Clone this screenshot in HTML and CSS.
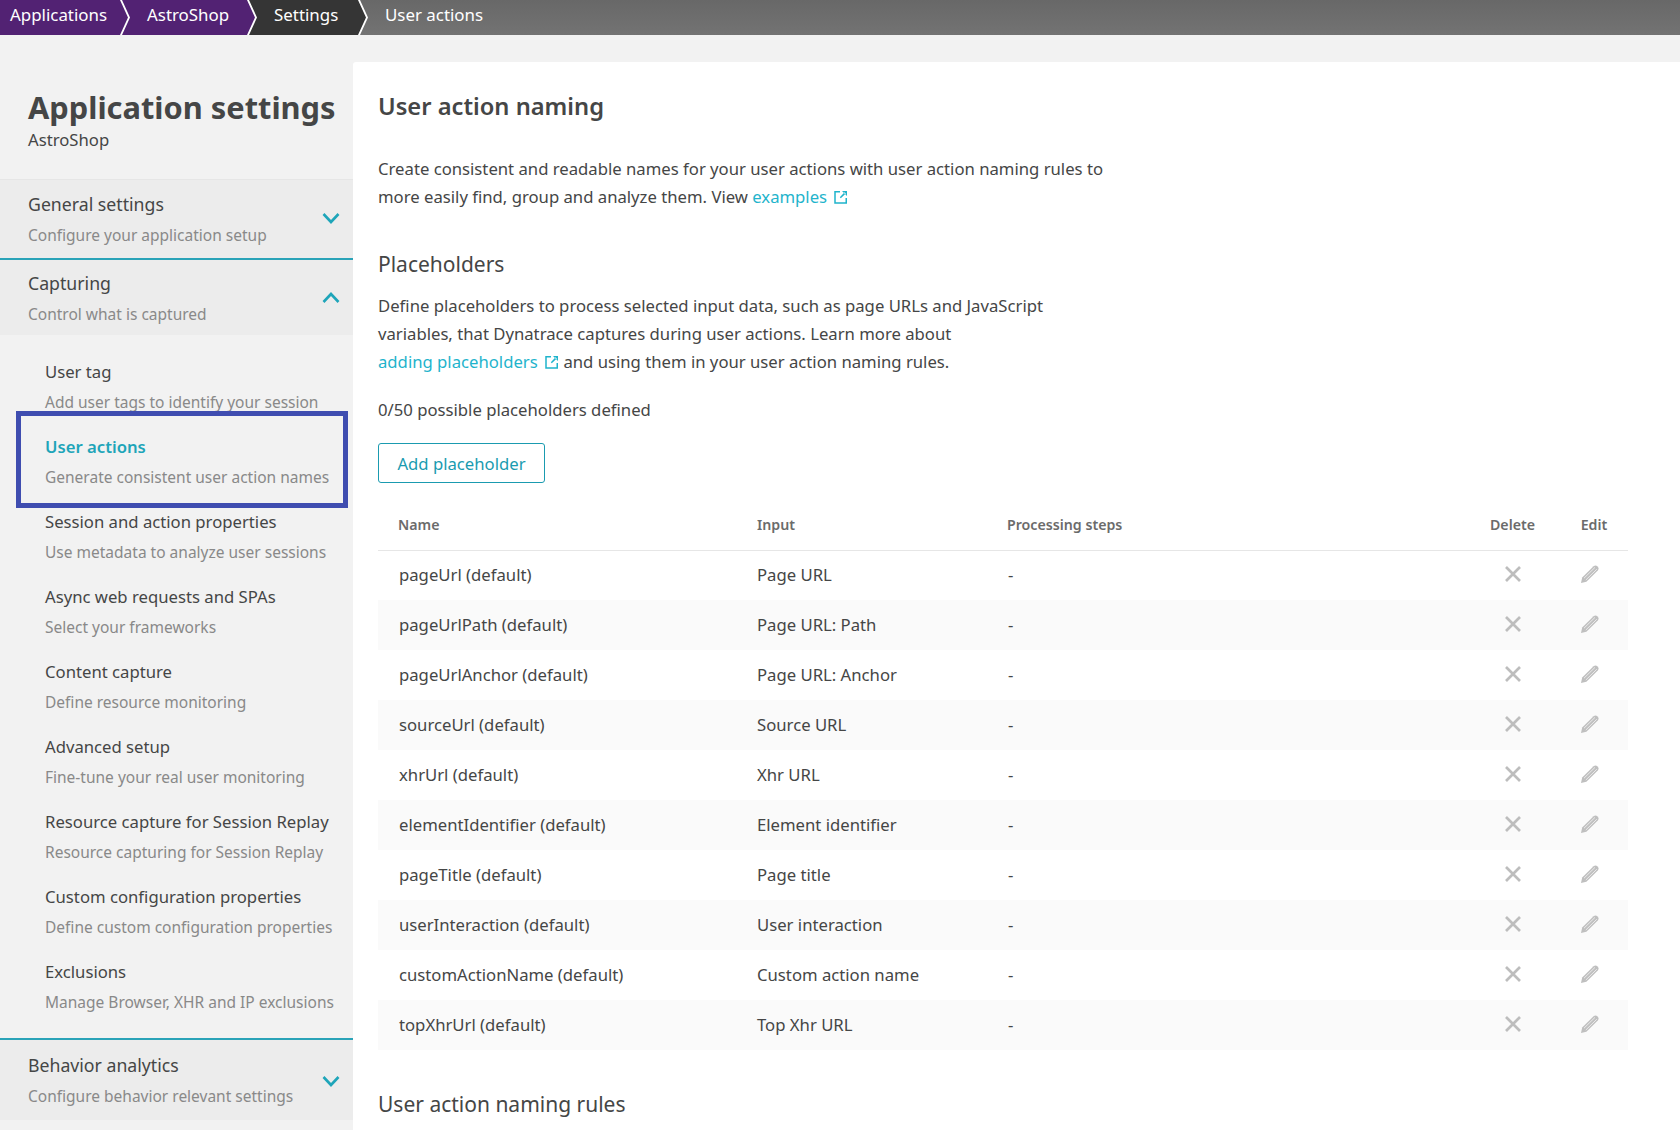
FILE: index.html
```html
<!DOCTYPE html>
<html lang="en">
<head>
    <meta charset="UTF-8">
    <meta name="viewport" content="width=device-width, initial-scale=1.0">
    <title>User actions - Application settings</title>
    <link rel="stylesheet" href="styles.css">
</head>
<body>
    <svg class="icon-defs" width="0" height="0" aria-hidden="true">
        <symbol id="i-down" viewBox="0 0 18 12"><path d="M1.5 2 L9 10 L16.5 2" fill="none" stroke="currentColor" stroke-width="2.6"/></symbol>
        <symbol id="i-up" viewBox="0 0 18 12"><path d="M1.5 10 L9 2 L16.5 10" fill="none" stroke="currentColor" stroke-width="2.6"/></symbol>
        <symbol id="i-ext" viewBox="0 0 14 14"><path d="M6 1.75 H1 V13 H12.25 V8" fill="none" stroke="currentColor" stroke-width="1.5"/><path d="M8 1 H13 V6 Z M10.6 2.2 L5.8 7.2 L6.8 8.2 L11.8 3.4 Z" fill="currentColor"/></symbol>
        <symbol id="i-x" viewBox="0 0 16 16"><path d="M1 1 L15 15 M15 1 L1 15" fill="none" stroke="currentColor" stroke-width="2.7"/></symbol>
        <symbol id="i-pen" viewBox="0 0 18 18"><path d="M0 18 L1.2 12.6 L12.6 1.2 Q14.6 -0.4 16.6 1.4 Q18.4 3.4 16.8 5.4 L5.4 16.8 Z" fill="#bfbfbf"/><path d="M3 13.2 L14 2.4 M4.8 15 L15.8 4.2" fill="none" stroke="#f0f0f0" stroke-width="0.9"/></symbol>
    </svg>

    <nav class="crumbs">
        <a class="crumb crumb-apps">Applications</a>
        <a class="crumb crumb-app">AstroShop</a>
        <a class="crumb crumb-settings">Settings</a>
        <span class="crumb crumb-last">User actions</span>
    </nav>

    <div class="layout">
        <aside class="sidebar">
            <header class="side-head">
                <h1>Application settings</h1>
                <p>AstroShop</p>
            </header>

            <section class="group group-top">
                <div class="group-text">
                    <h2>General settings</h2>
                    <p>Configure your application setup</p>
                </div>
                <svg class="chev"><use href="#i-down"/></svg>
            </section>

            <section class="group group-open">
                <div class="group-text">
                    <h2>Capturing</h2>
                    <p>Control what is captured</p>
                </div>
                <svg class="chev"><use href="#i-up"/></svg>
            </section>

            <ul class="side-items">
                <li><h3>User tag</h3><p>Add user tags to identify your session</p></li>
                <li class="active"><h3>User actions</h3><p>Generate consistent user action names</p></li>
                <li><h3>Session and action properties</h3><p>Use metadata to analyze user sessions</p></li>
                <li><h3>Async web requests and SPAs</h3><p>Select your frameworks</p></li>
                <li><h3>Content capture</h3><p>Define resource monitoring</p></li>
                <li><h3>Advanced setup</h3><p>Fine-tune your real user monitoring</p></li>
                <li><h3>Resource capture for Session Replay</h3><p>Resource capturing for Session Replay</p></li>
                <li><h3>Custom configuration properties</h3><p>Define custom configuration properties</p></li>
                <li><h3>Exclusions</h3><p>Manage Browser, XHR and IP exclusions</p></li>
            </ul>

            <section class="group group-open group-last">
                <div class="group-text">
                    <h2>Behavior analytics</h2>
                    <p>Configure behavior relevant settings</p>
                </div>
                <svg class="chev"><use href="#i-down"/></svg>
            </section>
        </aside>

        <main class="panel">
            <h2 class="page-title">User action naming</h2>
            <p class="text intro">Create consistent and readable names for your user actions with user action naming rules to more easily find, group and analyze them. View <a class="link">examples <svg class="ext"><use href="#i-ext"/></svg></a></p>

            <h3 class="sub-title">Placeholders</h3>
            <p class="text">Define placeholders to process selected input data, such as page URLs and JavaScript variables, that Dynatrace captures during user actions. Learn more about <a class="link">adding placeholders <svg class="ext"><use href="#i-ext"/></svg></a> and using them in your user action naming rules.</p>
            <p class="count">0/50 possible placeholders defined</p>
            <button class="btn">Add placeholder</button>

            <table class="ph-table">
                <thead>
                    <tr>
                        <th class="col-name">Name</th>
                        <th class="col-input">Input</th>
                        <th>Processing steps</th>
                        <th class="col-del">Delete</th>
                        <th class="col-edit">Edit</th>
                    </tr>
                </thead>
                <tbody>
                    <tr><td>pageUrl (default)</td><td>Page URL</td><td>-</td><td class="col-del"><svg class="ico-x"><use href="#i-x"/></svg></td><td class="col-edit"><svg class="ico-pen"><use href="#i-pen"/></svg></td></tr>
                    <tr><td>pageUrlPath (default)</td><td>Page URL: Path</td><td>-</td><td class="col-del"><svg class="ico-x"><use href="#i-x"/></svg></td><td class="col-edit"><svg class="ico-pen"><use href="#i-pen"/></svg></td></tr>
                    <tr><td>pageUrlAnchor (default)</td><td>Page URL: Anchor</td><td>-</td><td class="col-del"><svg class="ico-x"><use href="#i-x"/></svg></td><td class="col-edit"><svg class="ico-pen"><use href="#i-pen"/></svg></td></tr>
                    <tr><td>sourceUrl (default)</td><td>Source URL</td><td>-</td><td class="col-del"><svg class="ico-x"><use href="#i-x"/></svg></td><td class="col-edit"><svg class="ico-pen"><use href="#i-pen"/></svg></td></tr>
                    <tr><td>xhrUrl (default)</td><td>Xhr URL</td><td>-</td><td class="col-del"><svg class="ico-x"><use href="#i-x"/></svg></td><td class="col-edit"><svg class="ico-pen"><use href="#i-pen"/></svg></td></tr>
                    <tr><td>elementIdentifier (default)</td><td>Element identifier</td><td>-</td><td class="col-del"><svg class="ico-x"><use href="#i-x"/></svg></td><td class="col-edit"><svg class="ico-pen"><use href="#i-pen"/></svg></td></tr>
                    <tr><td>pageTitle (default)</td><td>Page title</td><td>-</td><td class="col-del"><svg class="ico-x"><use href="#i-x"/></svg></td><td class="col-edit"><svg class="ico-pen"><use href="#i-pen"/></svg></td></tr>
                    <tr><td>userInteraction (default)</td><td>User interaction</td><td>-</td><td class="col-del"><svg class="ico-x"><use href="#i-x"/></svg></td><td class="col-edit"><svg class="ico-pen"><use href="#i-pen"/></svg></td></tr>
                    <tr><td>customActionName (default)</td><td>Custom action name</td><td>-</td><td class="col-del"><svg class="ico-x"><use href="#i-x"/></svg></td><td class="col-edit"><svg class="ico-pen"><use href="#i-pen"/></svg></td></tr>
                    <tr><td>topXhrUrl (default)</td><td>Top Xhr URL</td><td>-</td><td class="col-del"><svg class="ico-x"><use href="#i-x"/></svg></td><td class="col-edit"><svg class="ico-pen"><use href="#i-pen"/></svg></td></tr>
                </tbody>
            </table>

            <h3 class="sub-title rules-title">User action naming rules</h3>
        </main>
    </div>
</body>
</html>
```

FILE: styles.css
```css
* {
    box-sizing: border-box;
}

html, body {
    height: 100%;
    overflow: hidden;
}

body {
    margin: 0;
    font-family: "Noto Sans", sans-serif;
    font-size: 16.7px;
    color: #454646;
    background: #f2f2f2;
}

h1, h2, h3, p, ul {
    margin: 0;
    padding: 0;
    font-weight: 400;
}

.icon-defs {
    position: absolute;
}

/* breadcrumbs: white shows through the gaps between the arrows */
.crumbs {
    display: flex;
    height: 35px;
    background: #fff;
    color: #fff;
    font-size: 16.9px;
    line-height: 30px;
}

.crumb {
    display: block;
    height: 35px;
    padding-left: 25px;
    margin-left: -6px;
    clip-path: polygon(0 0, calc(100% - 8px) 0, 100% 50%, calc(100% - 8px) 100%, 0 100%, 8px 50%);
}

.crumb-apps {
    width: 128px;
    margin-left: 0;
    padding-left: 10px;
    background: #522273;
    clip-path: polygon(0 0, calc(100% - 8px) 0, 100% 50%, calc(100% - 8px) 100%, 0 100%);
}

.crumb-app {
    width: 133px;
    background: #522273;
}

.crumb-settings {
    width: 117px;
    background: #353535;
}

.crumb-last {
    flex: 1;
    background: linear-gradient(#686868, #737373);
    clip-path: polygon(0 0, 100% 0, 100% 100%, 0 100%, 8px 50%);
}

.layout {
    display: flex;
    align-items: flex-start;
}

/* sidebar */
.sidebar {
    width: 353px;
    flex-shrink: 0;
}

.side-head {
    padding: 52px 10px 0 28px;
    height: 144px;
}

.side-head h1 {
    font-size: 30.8px;
    font-weight: 700;
    line-height: 40px;
    white-space: nowrap;
}

.side-head p {
    line-height: 26px;
}

.group {
    display: flex;
    justify-content: space-between;
    align-items: center;
    padding: 0 13px 0 28px;
    background: #ececec;
}

.group-top {
    height: 81px;
    border-top: 1px solid #e6e6e6;
    border-bottom: 2px solid #2aa3b8;
    padding-top: 1px;
}

.group-open {
    height: 75px;
    padding-top: 1px;
}

.group h2 {
    font-size: 17.7px;
    line-height: 24px;
    color: #454646;
}

.group p {
    font-size: 15.5px;
    line-height: 24px;
    margin-top: 7px;
    color: #898989;
}

.chev {
    width: 18px;
    height: 12px;
    margin-top: -3px;
    color: #1ea5b9;
}

.group-open .chev {
    margin-top: 0;
}

.side-items {
    list-style: none;
    padding-top: 11px;
    height: 705px;
    border-bottom: 2px solid #2aa3b8;
}

.side-items li {
    position: relative;
    height: 75px;
    padding-left: 45px;
    padding-top: 14px;
}

.side-items h3 {
    font-size: 16.7px;
    line-height: 24px;
    color: #454646;
}

.side-items p {
    font-size: 15.5px;
    line-height: 24px;
    margin-top: 6px;
    color: #898989;
    white-space: nowrap;
}

.side-items .active h3 {
    color: #1ea5b9;
    font-weight: 600;
}

/* annotation box round the current item */
.side-items .active::after {
    content: "";
    position: absolute;
    left: 16px;
    right: 5px;
    top: -10px;
    bottom: -12px;
    border: 5px solid #3f4db0;
}

.group-last {
    height: 80px;
    padding-top: 1px;
}

/* main panel */
.panel {
    flex: 1;
    margin-top: 27px;
    height: 1068px;
    padding: 28px 52px 0 25px;
    background: #fff;
    border-radius: 3px 0 0 0;
}

.page-title {
    font-size: 23.7px;
    font-weight: 600;
    line-height: 32px;
}

.text {
    width: 730px;
    line-height: 28px;
}

.intro {
    margin-top: 33px;
}

.link {
    color: #1fb4cc;
    white-space: nowrap;
}

.ext {
    width: 14px;
    height: 14px;
    margin-left: 3px;
    vertical-align: -1px;
}

.sub-title {
    font-size: 21px;
    line-height: 28px;
    margin-top: 39px;
    margin-bottom: 14px;
}

.count {
    margin-top: 20px;
    line-height: 28px;
}

.btn {
    display: block;
    margin-top: 19px;
    width: 167px;
    height: 40px;
    padding: 0;
    font-family: inherit;
    font-size: 16.7px;
    color: #1a9bb0;
    background: #fff;
    border: 1px solid #1a9bb0;
    border-radius: 3px;
}

.ph-table {
    width: 100%;
    margin-top: 16px;
    border-collapse: collapse;
    table-layout: fixed;
}

.ph-table th {
    height: 51px;
    padding: 0 0 0 20px;
    font-size: 14.2px;
    font-weight: 600;
    text-align: left;
    color: #6b6b6b;
    border-bottom: 1px solid #e6e6e6;
}

.ph-table td {
    height: 50px;
    padding: 0 0 0 21px;
    line-height: 24px;
}

.ph-table tbody tr:nth-child(even) {
    background: #fafafa;
}

.ph-table .col-name {
    width: 358px;
}

.ph-table .col-input {
    width: 251px;
    padding-left: 21px;
}

.ph-table .col-del {
    width: 95px;
    padding: 0 10px 0 0;
    text-align: center;
}

.ph-table .col-edit {
    width: 63px;
    padding: 0 5px 0 0;
    text-align: center;
}

.ph-table td.col-edit {
    padding-right: 14px;
}

.ico-x {
    width: 16px;
    height: 16px;
    color: #bdbdbd;
    display: block;
    margin: -3px auto 0;
}

.ico-pen {
    width: 18px;
    height: 18px;
    display: block;
    margin: -3px auto 0;
}

.rules-title {
    margin-top: 40px;
}
```
